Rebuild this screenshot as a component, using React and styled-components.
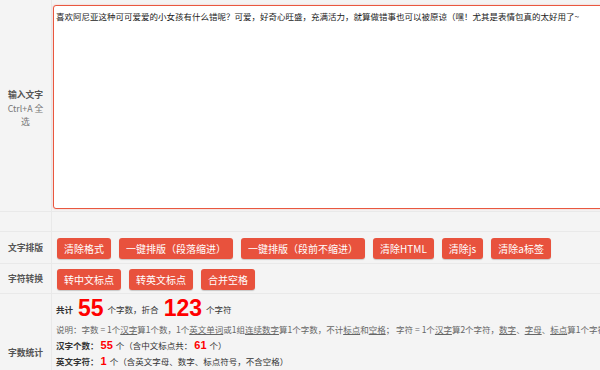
import React from 'react';
import styled, { createGlobalStyle } from 'styled-components';

const GlobalStyle = createGlobalStyle`
  html, body {
    margin: 0;
    padding: 0;
    background: #f4f4f4;
    overflow: hidden;
  }
  body {
    font-family: "Noto Sans CJK SC", "Noto Sans", sans-serif;
    color: #333;
  }
`;

const Table = styled.div`
  width: 660px;
  display: flex;
  flex-direction: column;
  background: #f4f4f4;
`;

const Row = styled.div`
  display: grid;
  grid-template-columns: 52px 1fr;
  border-bottom: 1px solid #e9e9e9;
  height: ${p => p.h ? `${p.h}px` : 'auto'};
  box-sizing: border-box;
`;

const Label = styled.div`
  border-right: 1px solid #e9e9e9;
  display: flex;
  flex-direction: column;
  align-items: center;
  justify-content: center;
  text-align: center;
  padding: ${p => p.pt || 0}px 5px 0;
  font-size: 8.8px;
  line-height: 13.5px;
  font-weight: bold;
  color: #555;
`;

const Hint = styled.span`
  font-weight: normal;
  color: #777;
`;

const Cell = styled.div`
  padding: ${p => p.pad || '0'};
  display: flex;
  flex-direction: ${p => p.col ? 'column' : 'row'};
  flex-wrap: wrap;
  align-items: flex-start;
  gap: ${p => p.gap || 0}px;
  min-width: 0;
`;

const TextBox = styled.textarea`
  width: 100%;
  height: 204px;
  box-sizing: border-box;
  margin: 5px 0 0 1px;
  border: 1.5px solid #e9573f;
  border-radius: 3px;
  box-shadow: 0 0 2px rgba(233, 87, 63, 0.35);
  background: #fff;
  padding: 4px 2px;
  font-family: "Noto Sans CJK SC", sans-serif;
  font-size: 8.5px;
  line-height: 13px;
  color: #1a1a1a;
  resize: none;
  outline: none;
`;

const Button = styled.button`
  height: 21px;
  padding: 0 7px;
  border: none;
  border-radius: 3px;
  background: #e8523d;
  box-shadow: 0 1px 1px rgba(0, 0, 0, 0.18);
  color: #fff;
  font-family: "Noto Sans CJK SC", "Noto Sans", sans-serif;
  font-size: 10px;
  line-height: 21px;
  white-space: nowrap;
  cursor: pointer;
`;

const StatLine = styled.div`
  font-size: 8.5px;
  line-height: ${p => p.lh || 16}px;
  color: ${p => p.muted ? '#666' : '#333'};
  white-space: nowrap;
`;

const Strong = styled.b`
  font-weight: bold;
  color: #333;
`;

const Big = styled.span`
  font-family: "Liberation Sans", Arial, sans-serif;
  font-size: 23px;
  font-weight: bold;
  color: #f00;
  margin: 0 4px 0 5px;
  vertical-align: -3px;
`;

const Num = styled.span`
  font-family: "Liberation Sans", Arial, sans-serif;
  font-size: 11px;
  font-weight: bold;
  color: #f00;
  margin: 0 3px 0 2px;
`;

const U = styled.span`
  text-decoration: underline;
`;

const text = '喜欢阿尼亚这种可可爱爱的小女孩有什么错呢？可爱，好奇心旺盛，充满活力，就算做错事也可以被原谅（嘿！尤其是表情包真的太好用了~';

const layoutButtons = ['清除格式', '一键排版（段落缩进）', '一键排版（段前不缩进）', '清除HTML', '清除js', '清除a标签'];
const convertButtons = ['转中文标点', '转英文标点', '合并空格'];

export default function App() {
  return (
    <>
      <GlobalStyle />
      <Table>
        <Row h={212}>
          <Label pt={6}>
            <span>输入文字</span>
            <Hint>Ctrl+A 全选</Hint>
          </Label>
          <Cell>
            <TextBox defaultValue={text} spellCheck={false} />
          </Cell>
        </Row>
        <Row h={20}>
          <Label />
          <Cell />
        </Row>
        <Row h={32}>
          <Label>文字排版</Label>
          <Cell pad="6px 0 0 5px" gap={8}>
            {layoutButtons.map(b => <Button key={b}>{b}</Button>)}
          </Cell>
        </Row>
        <Row h={30}>
          <Label>字符转换</Label>
          <Cell pad="5px 0 0 5px" gap={8}>
            {convertButtons.map(b => <Button key={b}>{b}</Button>)}
          </Cell>
        </Row>
        <Row h={118}>
          <Label>字数统计</Label>
          <Cell col pad="3px 0 0 4px">
            <StatLine lh={23}>
              <Strong>共计</Strong>
              <Big>55</Big>个字数，折合<Big>123</Big>个字符
            </StatLine>
            <StatLine muted>
              说明：字数 = 1个<U>汉字</U>算1个数，1个<U>英文单词</U>或1组<U>连续数字</U>算1个字数，不计<U>标点</U>和<U>空格</U>； 字符 = 1个<U>汉字</U>算2个字符，<U>数字</U>、<U>字母</U>、<U>标点</U>算1个字符
            </StatLine>
            <StatLine>
              <Strong>汉字个数：</Strong><Num>55</Num>个（含中文标点共：<Num>61</Num>个）
            </StatLine>
            <StatLine>
              <Strong>英文字符：</Strong><Num>1</Num>个（含英文字母、数字、标点符号，不含空格）
            </StatLine>
          </Cell>
        </Row>
      </Table>
    </>
  );
}
